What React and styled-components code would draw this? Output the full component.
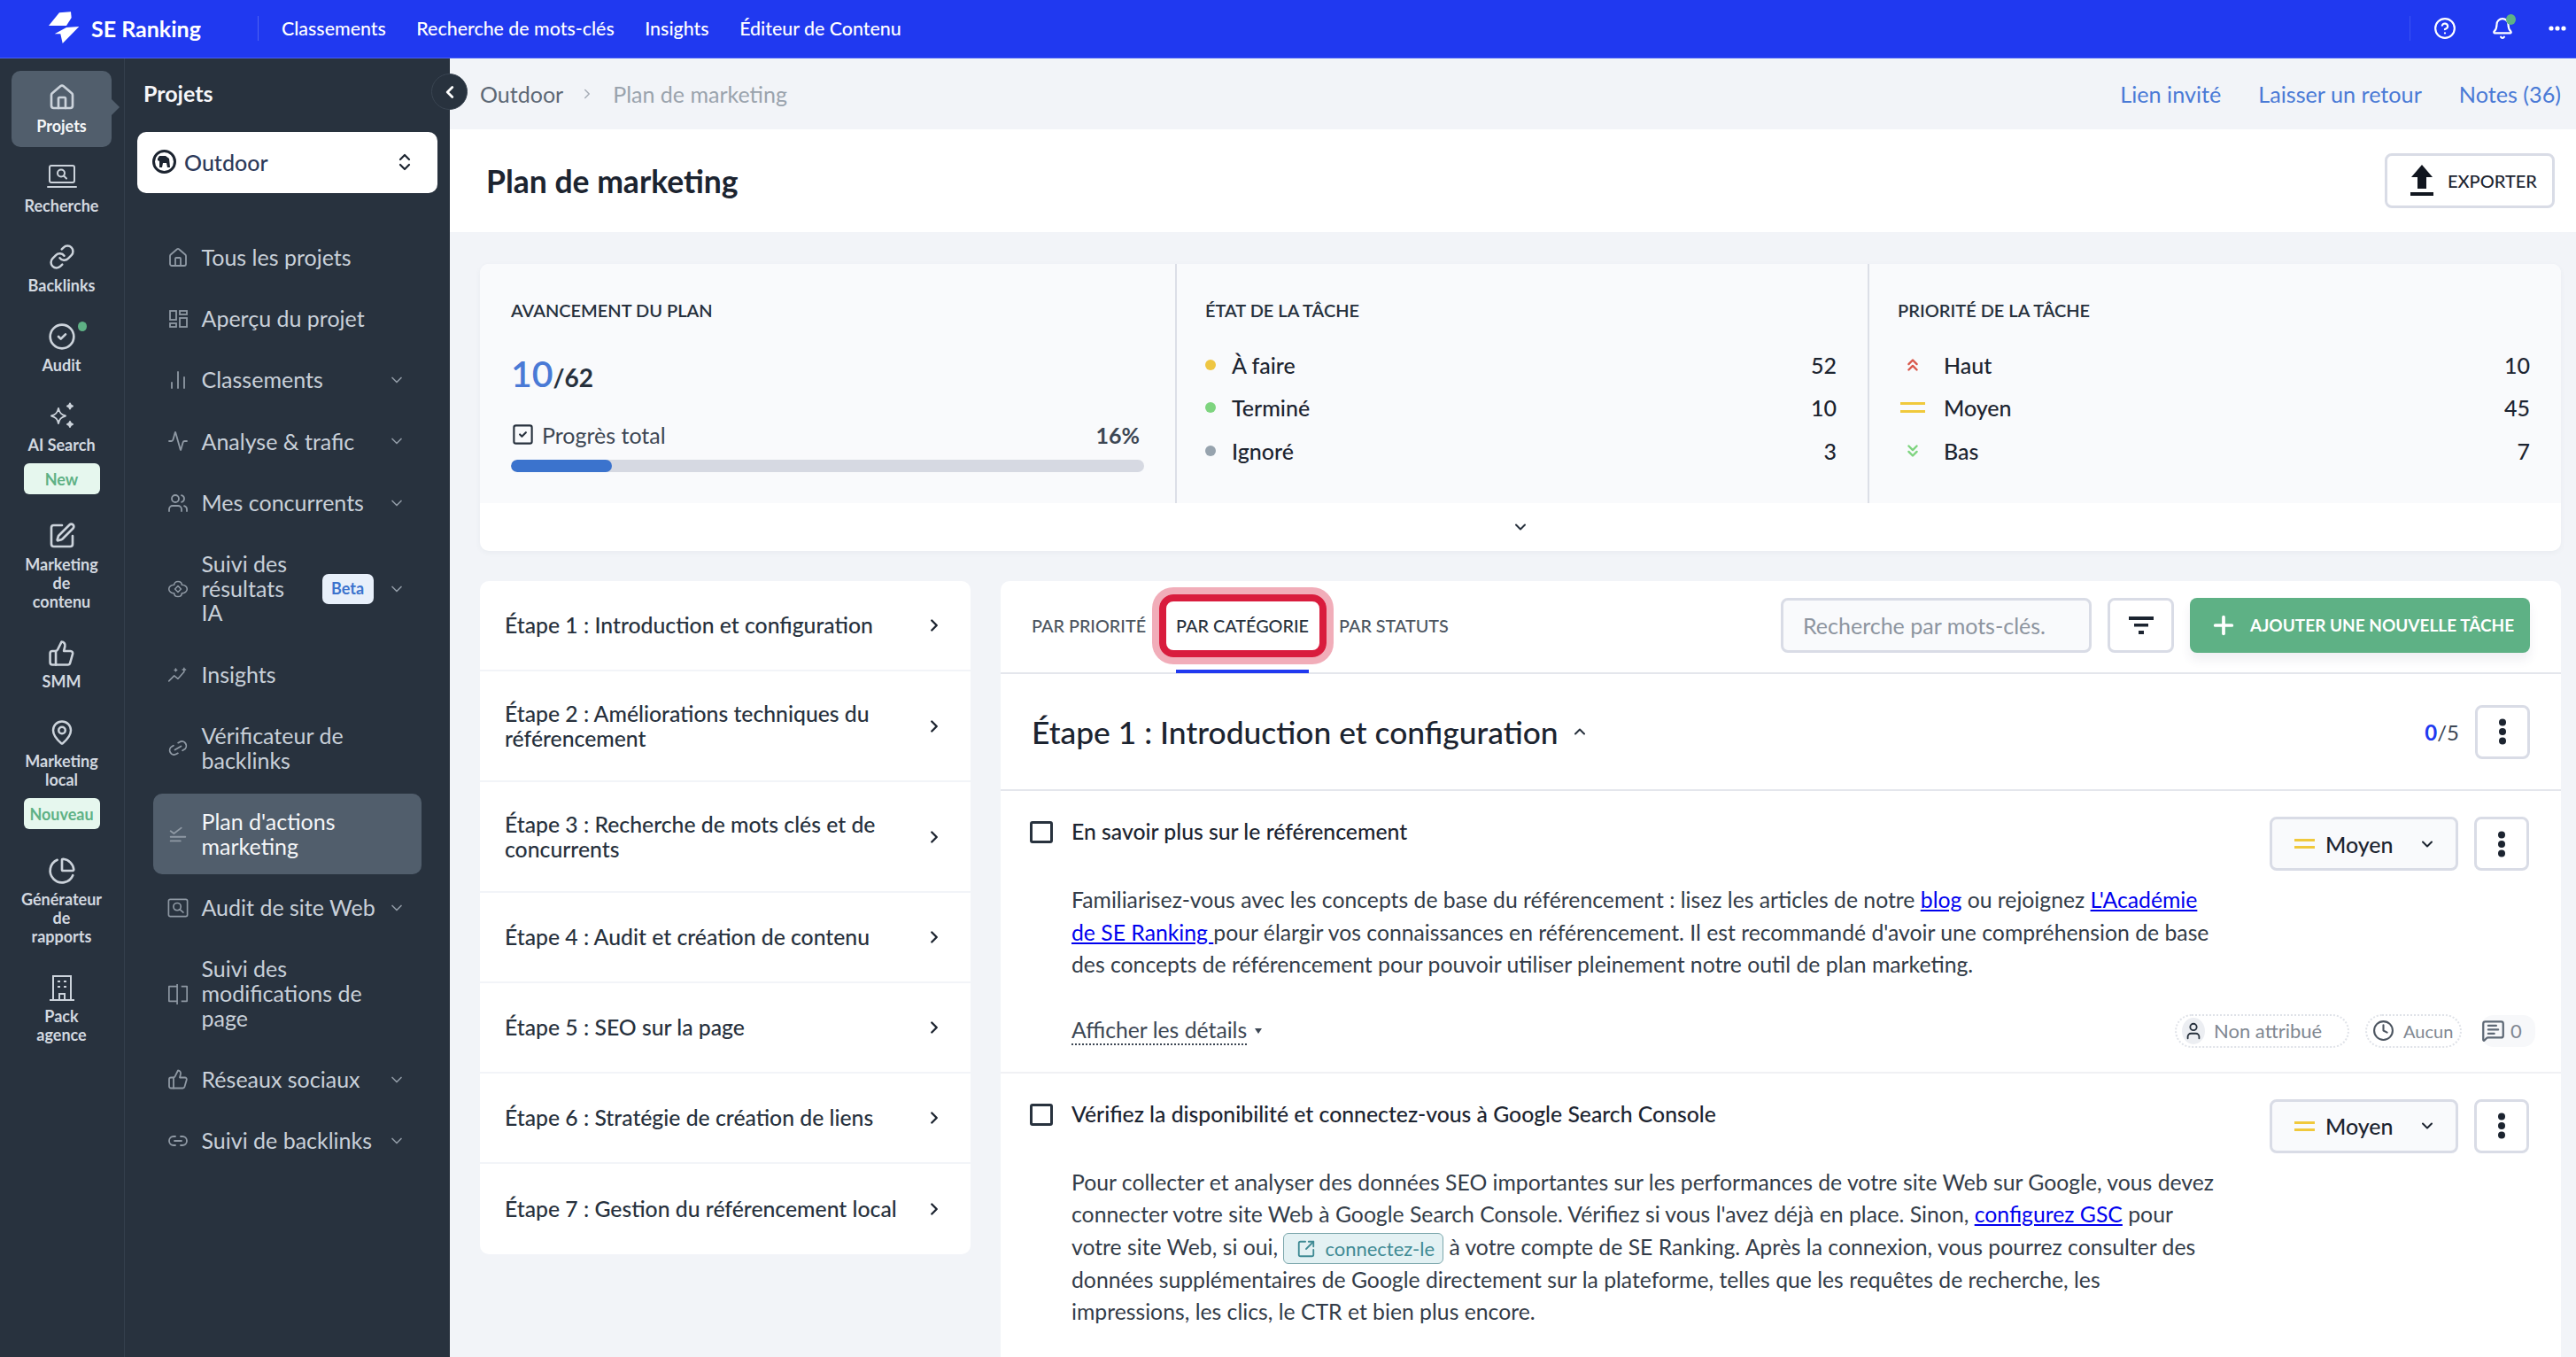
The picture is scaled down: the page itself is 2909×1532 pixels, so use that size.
import React from "react";
import styled, { createGlobalStyle } from "styled-components";
import {
  House, Link as LinkIcon, Link2, SquarePen, ThumbsUp, ChartPie, Activity, Users,
  ChartNoAxesColumn, ChevronDown, ChevronRight, ChevronLeft, ChevronUp, ChevronsUpDown, Bell, CircleHelp,
  CircleCheck, MapPin, Clock, Plus, User, SquareCheck, SquareArrowOutUpRight, MessageSquareText, ChevronsUp, ChevronsDown,
} from "lucide-react";

const Global = createGlobalStyle`
  html, body { margin: 0; padding: 0; background: #f2f4f8; }
  body { font-family: Lato, "Noto Sans", sans-serif; color: #1c2430; }
  *, *::before, *::after { box-sizing: border-box; }
`;

const Page = styled.div`
  width: 2909px; height: 1532px; overflow: hidden;
  display: flex; flex-direction: column; background: #f2f4f8;
`;
const TopBar = styled.header`
  height: 66px; flex: none; background: #2039f0; display: flex; align-items: center; color: #fff;
  border-bottom: 1px solid #4a60f5; padding-bottom: 2px;
`;
const Brand = styled.div`
  width: 292px; height: 28px; display: flex; align-items: center; padding-left: 54px; gap: 13px;
  font-size: 25px; font-weight: 700; border-right: 1px solid #4f62f2; white-space: nowrap;
`;
const TopNav = styled.nav`
  display: flex; gap: 34.5px; padding-left: 26px; font-size: 21.4px; font-weight: 500;
`;
const TopRight = styled.div`
  margin-left: auto; display: flex; align-items: center; height: 28px; border-left: 1px solid #3b52f2;
  padding-left: 26px; padding-right: 11px; gap: 39px;
`;
const BellWrap = styled.span`
  position: relative; display: flex;
  &::after { content: ""; position: absolute; top: -3px; right: -2px; width: 11px; height: 12px; border-radius: 50%; background: #5eb185; }
`;
const Body = styled.div`flex: 1; display: flex; min-height: 0;`;
const Rail = styled.aside`
  width: 141px; flex: none; background: #28323e; border-right: 1px solid #343f4c;
  padding: 14px 14px 0 13px; display: flex; flex-direction: column; gap: 4px;
`;
const RailItem = styled.div`
  position: relative; padding: 14px 0 13px; display: flex; flex-direction: column; align-items: center;
  border-radius: 10px; color: ${p => (p.$active ? "#f4f6f8" : "#d3d9e0")};
  background: ${p => (p.$active ? "#515e6c" : "transparent")};
  ${p => p.$active && `&::after { content: ""; position: absolute; right: -9px; top: 32px; border-left: 9px solid #515e6c; border-top: 9px solid transparent; border-bottom: 9px solid transparent; }`}
`;
const RailIcon = styled.span`
  position: relative; height: 32px; display: flex; align-items: center; justify-content: center; color: #ccd3db;
`;
const RailDot = styled.i`
  position: absolute; right: -12px; top: -1px; width: 10px; height: 11px; border-radius: 50%; background: #5eb185;
`;
const RailLabel = styled.div`
  margin-top: 6px; font-size: 18px; line-height: 21px; font-weight: 700; text-align: center; width: 92px; white-space: pre-line;
`;
const RailBadge = styled.div`
  margin-top: 10px; width: 86px; height: 35px; border-radius: 6px; background: #e6f7ee; color: #5eb185;
  font-size: 18px; font-weight: 700; display: flex; align-items: center; justify-content: center;
`;
const Side = styled.aside`
  width: 367px; flex: none; background: #28323e; padding: 0 14px 0 14px; color: #c8d0d9;
`;
const SideTitle = styled.div`
  height: 83px; padding: 0 0 6px 7px; display: flex; align-items: center;
  font-size: 25px; font-weight: 700; color: #f6f7f9;
`;
const ProjectSelect = styled.div`
  height: 69px; background: #fff; border-radius: 10px; display: flex; align-items: center;
  padding: 0 25px 2px 17px; gap: 9px; font-size: 25px; color: #2d3a5a; font-weight: 500;
  margin-bottom: 38px;
`;
const ProjectLogo = styled.span`
  width: 27px; height: 27px; border-radius: 50%; border: 3.5px solid #1c2430; display: flex; align-items: center; justify-content: center;
`;
const Caret = styled.span`margin-left: auto; display: flex; color: #1c2430;`;
const NavList = styled.div`display: flex; flex-direction: column; padding: 0 18px 0 18px;`;
const NavRow = styled.div`
  display: flex; align-items: center; padding: ${p => (p.$active ? "18px 18px 18px 16px" : "20.85px 18px 20.85px 16px")};
  margin: ${p => (p.$active ? "3px 0 3px" : "0")}; border-radius: 10px; font-size: 25px; line-height: 27.6px;
  background: ${p => (p.$active ? "#515e6c" : "transparent")}; color: ${p => (p.$active ? "#f5f6f8" : "#c8d0d9")};
`;
const NavIcon = styled.span`width: 24px; flex: none; margin-right: 14.5px; display: flex; justify-content: center; color: #8f99a4;`;
const NavText = styled.span`flex: ${p => (p.$narrow ? "none" : "1")}; width: ${p => (p.$narrow ? "118px" : "auto")};`;
const NavChevron = styled.span`width: 20px; flex: none; margin-left: auto; display: flex; justify-content: center; color: #8f99a4;`;
const NavSpacer = styled.span`width: 20px; flex: none; margin-left: auto;`;
const BetaBadge = styled.span`
  width: 58px; height: 34px; margin-left: 18px; border-radius: 7px; background: #e8f0fa; color: #3b73cd;
  font-size: 18px; font-weight: 700; display: flex; align-items: center; justify-content: center;
`;
const Main = styled.main`position: relative; flex: 1; min-width: 0; display: flex; flex-direction: column;`;
const Collapse = styled.div`
  position: absolute; left: -21px; top: 17px; width: 41px; height: 41px; border-radius: 50%;
  background: #28323e; border: 1px solid #3a4552; color: #fff; display: flex; align-items: center; justify-content: center;
`;
const Crumbs = styled.div`
  height: 80px; flex: none; display: flex; align-items: center; padding: 0 17px 0 34px; font-size: 25px;
`;
const CrumbLink = styled.span`color: #5d6875;`;
const CrumbSep = styled.span`display: flex; margin: 0 20px 0 18px; color: #a6adb6;`;
const CrumbCurrent = styled.span`color: #9aa3ad;`;
const GuestLinks = styled.div`margin-left: auto; display: flex; gap: 42px; color: #4a7ad6; font-size: 25.2px;`;
const TitleBand = styled.div`
  height: 116px; flex: none; background: #fff; display: flex; align-items: center; justify-content: space-between; padding: 0 24px 0 41px;
`;
const Title = styled.h1`margin: 0; font-size: 35.5px; font-weight: 700; color: #1c2430;`;
const ExportButton = styled.div`
  width: 192px; height: 62px; border: 3.5px solid #d9dce6; border-radius: 8px; display: flex; align-items: center;
  padding-left: 26px; gap: 16px; font-size: 20px; font-weight: 500; color: #1c2430;
`;
const Content = styled.div`flex: 1; min-height: 0; padding: 36px 17px 0 34px; display: flex; flex-direction: column; gap: 34px;`;
const StatCard = styled.section`
  flex: none; background: #fff; border-radius: 10px; box-shadow: 0 2px 6px rgba(60, 70, 100, .05); overflow: hidden;
`;
const StatGrid = styled.div`display: grid; grid-template-columns: 785px 782px 1fr; height: 270px; background: #f9fafc;`;
const StatCol = styled.div`
  padding: 40px 35px 0 ${p => (p.$first ? "35px" : "32px")};
  border-left: ${p => (p.$first ? "none" : "2px solid #dcdfe7")};
`;
const StatHead = styled.div`font-size: 20px; line-height: 24px; font-weight: 600; color: #27313d; margin-bottom: 25.5px;`;
const StatRow = styled.div`height: 48.5px; display: flex; align-items: center; font-size: 25px; color: #1c2430; font-weight: 500;`;
const Dot = styled.i`width: 12px; height: 12px; border-radius: 50%; background: ${p => p.$c}; margin-right: 18px;`;
const PrioIcon = styled.span`width: 34px; margin-right: 18px; display: flex; justify-content: center; color: ${p => p.$c};`;
const StatNum = styled.span`margin-left: auto;`;
const Score = styled.div`margin-top: 34.5px; height: 51px; display: flex; align-items: baseline; font-size: 28px; font-weight: 700; color: #27313d;`;
const ScoreMain = styled.span`font-size: 41px; font-weight: 600; color: #4a7ad6;`;
const ProgressRow = styled.div`
  margin-top: 28px; height: 30px; display: flex; align-items: center; gap: 8px; font-size: 25px; color: #3d4754;
`;
const Percent = styled.span`margin-left: auto; padding-right: 5px; font-weight: 700;`;
const Bar = styled.div`margin-top: 13px; height: 14px; border-radius: 7px; background: #d6d9e2; overflow: hidden;`;
const BarFill = styled.div`height: 100%; background: #3b73cd; border-radius: 7px;`;
const ExpandRow = styled.div`height: 54px; display: flex; align-items: center; justify-content: center; color: #27313d;`;
const Columns = styled.div`flex: 1; min-height: 0; display: flex; gap: 34px; align-items: flex-start;`;
const StepsPanel = styled.section`width: 554px; flex: none; background: #fff; border-radius: 10px;`;
const StepRow = styled.div`
  min-height: 102px; padding: 34px 30px 34px 28px; display: flex; align-items: center; justify-content: space-between;
  font-size: 24.75px; line-height: 27.5px; font-weight: 500; color: #27313d; gap: 20px;
  border-bottom: ${p => (p.$last ? "none" : "2px solid #f2f4f8")};
`;
const StepChevron = styled.span`display: flex; flex: none; color: #1c2430;`;
const TaskPanel = styled.section`
  flex: 1; min-width: 0; background: #fff; border-radius: 10px 10px 0 0; height: 900px;
`;
const TabsBar = styled.div`
  height: 105px; padding: 0 35px; display: flex; align-items: center; border-bottom: 2px solid #e4e6ec;
`;
const Tabs = styled.div`display: flex; gap: 34px; height: 100%; align-self: stretch;`;
const Tab = styled.div`
  position: relative; display: flex; align-items: center; height: 104px; padding-bottom: 4px;
  font-size: 19.8px; font-weight: 500; color: #4c5560; white-space: nowrap;
  ${p => p.$active && `
    color: #27313d;
    &::before { content: ""; position: absolute; left: -19px; right: -20px; top: 15px; height: 71px; border: 8px solid #d91c3d; border-radius: 16px; box-shadow: 0 0 0 8px rgba(217,28,61,.36); }
    &::after { content: ""; position: absolute; left: 0; right: 0; bottom: 0; height: 4px; background: #2039f0; }
  `}
`;
const TabText = styled.span`position: relative;`;
const Controls = styled.div`margin-left: auto; display: flex; align-items: center; gap: 18px; padding-bottom: 4px;`;
const SearchBox = styled.div`
  width: 351px; height: 62px; border: 3.5px solid #d9dce6; border-radius: 8px; background: #f9fafc; display: flex; align-items: center;
  padding-left: 22px; font-size: 25px; color: #8d95a0;
`;
const SquareBtn = styled.div`
  width: ${p => p.$w || "62px"}; height: ${p => p.$h || "61px"}; flex: none; border: 3.5px solid #d9dce6; border-radius: 8px; background: #fff;
  display: flex; align-items: center; justify-content: center; color: #1c2430;
`;
const AddBtn = styled.div`
  width: 384px; height: 62px; border-radius: 8px; background: #5eb185; color: #fff; display: flex; align-items: center;
  padding-left: 22px; gap: 14px; font-size: 19px; font-weight: 700; white-space: nowrap; box-shadow: 0 8px 12px rgba(60,70,100,.08);
`;
const SectionHead = styled.div`
  height: 132px; padding: 0 35px; display: flex; align-items: center; border-bottom: 2px solid #e4e6ec;
`;
const SectionTitle = styled.h2`margin: 0; font-size: 35.4px; font-weight: 500; color: #1c2430;`;
const SectionCaret = styled.span`display: flex; margin-left: 14px; color: #27313d;`;
const SectionCount = styled.div`margin-left: auto; margin-right: 18px; font-size: 24px; color: #3d4754;`;
const CountMain = styled.span`color: #2039f0; font-weight: 700;`;
const Task = styled.article`border-bottom: ${p => (p.$last ? "none" : "2px solid #f0f1f4")};`;
const TaskHead = styled.div`display: flex; align-items: flex-start; padding: 29px 36px 0 33px;`;
const CheckBox = styled.span`
  width: 26px; height: 25px; margin: 5px 21px 0 0; flex: none; border: 3.5px solid #28323e; border-radius: 3px;
`;
const TaskTitle = styled.div`font-size: 24.75px; line-height: 33px; font-weight: 500; color: #1c2430;`;
const TaskActions = styled.div`margin-left: auto; display: flex; gap: 18px;`;
const PrioritySelect = styled.div`
  width: 213px; height: 61px; border: 3.5px solid #d9dce6; border-radius: 8px; background: #f9fafc;
  display: flex; align-items: center; padding: 0 22px 0 25px; gap: 12px; font-size: 25px; font-weight: 500; color: #1c2430;
`;
const SelectCaret = styled.span`display: flex; margin-left: auto;`;
const EqualBars = styled.span`
  width: ${p => p.$w}; height: ${p => p.$h}; border-top: ${p => p.$t} solid #f0c93c; border-bottom: ${p => p.$t} solid #f0c93c; display: block;
`;
const Desc = styled.p`
  margin: 15px 0 0; padding-left: 80px; width: 1380px; font-size: 24.75px; line-height: 36.6px; color: #333c48;
`;
const A = styled.a`color: #0000ee; text-decoration: underline;`;
const Chip = styled.span`
  display: inline-flex; align-items: center; vertical-align: middle; height: 35px; padding: 0 9px 0 14px; gap: 10px; margin: -6px 0 -4px;
  font-size: 22px; line-height: 24px; color: #3f8a94; background: #e3f1f3; border: 1.5px solid #7da8ad; border-radius: 6px;
`;
const MetaRow = styled.div`
  margin-top: 37px; padding: 0 29px 27px 80px; display: flex; align-items: center; height: 65px;
`;
const Details = styled.span`display: flex; align-items: center; gap: 9px; font-size: 24.75px; color: #3d4754;`;
const DetailsText = styled.span`border-bottom: 2px dotted #3d4754; line-height: 30px;`;
const DetailsCaret = styled.i`border-top: 6px solid #3d4754; border-left: 4px solid transparent; border-right: 4px solid transparent;`;
const Pill = styled.div`
  height: 38px; width: ${p => p.$w}; margin-left: ${p => p.$ml || "0"}; border: 2px dotted #dfe2e8; border-radius: 19px; display: flex; align-items: center;
  padding-left: 6px; gap: ${p => p.$gap || "10px"}; font-size: ${p => p.$fs || "22px"}; color: #808791;
`;
const Avatar = styled.span`
  width: 26px; height: 30px; border-radius: 50%; background: #eceef2; display: flex; align-items: center; justify-content: center; color: #27313d;
`;
const CommentPill = styled.div`
  margin-left: 22px; height: 36px; width: 61px; border-radius: 14px; background: #f7f8fa; display: flex; align-items: center; gap: 6px;
  font-size: 22px; color: #808791;
`;

const Logo = () => (
  <svg width="36" height="37" viewBox="14 8 36 37" fill="#fff">
    <path d="M15 24L27 9.300L40 8.300L40.700 15L35 24Z" />
    <path d="M21.700 33.300L35 26L49.300 25L30.700 44L28.300 33.300Z" />
  </svg>
);

const s = { fill: "none", stroke: "currentColor", strokeWidth: 2, strokeLinecap: "round", strokeLinejoin: "round" };
const LaptopSearch = () => (
  <svg width="34" height="30" viewBox="0 0 34 30" {...s}>
    <rect x="3" y="2" width="28" height="19" rx="2" /><circle cx="16" cy="10.5" r="4" /><path d="M19 13.5l3 3" /><path d="M1 26h32" />
  </svg>
);
const Stars = () => (
  <svg width="34" height="32" viewBox="0 0 34 32" {...s} strokeWidth="1.9">
    <path d="M13 7c1 5 3 7 8 8.500-5 1.500-7 3.500-8 8.500-1-5-3-7-8-8.500 5-1.500 7-3.500 8-8.500z" />
    <path d="M26 1.500c.4 2 1 2.600 3 3-2 .4-2.600 1-3 3-.4-2-1-2.600-3-3 2-.4 2.600-1 3-3zM26 22c.4 2 1 2.600 3 3-2 .4-2.600 1-3 3-.4-2-1-2.600-3-3 2-.4 2.600-1 3-3z" fill="currentColor" />
  </svg>
);
const Agency = () => (
  <svg width="30" height="32" viewBox="0 0 30 32" {...s} strokeLinecap="butt" strokeLinejoin="miter">
    <path d="M5 30V3h20v27M1 30h28" /><path d="M12 30v-7h6v7M10 9h3M17 9h3M10 15h3M17 15h3" />
  </svg>
);
const Bullet = () => <svg width="26" height="24" viewBox="0 0 26 24" {...s}><path d="M4 8l4 3 9-7M4 15h18M4 20h12" /></svg>;
const Diamond = () => (
  <svg width="28" height="24" viewBox="0 0 28 24" {...s} strokeWidth="1.800">
    <path d="M14 2c3 0 5 2 5 4.500 4 0 7 2.500 7 5.500s-3 5.500-7 5.500c0 2.500-2 4.500-5 4.500s-5-2-5-4.500c-4 0-7-2.500-7-5.500s3-5.500 7-5.500C9 4 11 2 14 2z" /><path d="M14 8l4 4-4 4-4-4z" />
  </svg>
);
const Dash = () => (
  <svg width="24" height="22" viewBox="0 0 24 22" {...s} strokeWidth="1.800" strokeLinecap="butt" strokeLinejoin="miter">
    <rect x="3" y="2" width="7" height="10" /><rect x="14" y="2" width="8" height="4" /><rect x="3" y="16" width="7" height="4" /><rect x="14" y="10" width="8" height="10" />
  </svg>
);
const Trend = () => (
  <svg width="28" height="22" viewBox="0 0 28 22" {...s} strokeWidth="1.800"><path d="M2 19l7-7 5 4 8-9" /><path d="M22 2v4M20 4h4M11 3v3M9.500 4.500h3" /></svg>
);
const AuditBox = () => (
  <svg width="26" height="24" viewBox="0 0 26 24" {...s} strokeWidth="1.800">
    <rect x="1.500" y="1.500" width="23" height="21" rx="2" /><circle cx="12" cy="10.500" r="4.500" /><path d="M15.500 14l4 3.500" />
  </svg>
);
const Compare = () => (
  <svg width="26" height="28" viewBox="0 0 26 28" {...s} strokeWidth="1.800" strokeLinecap="butt">
    <path d="M12 5H2v18h10M12 2v25M17 5h7v18h-7" />
  </svg>
);
const UploadIcon = () => (
  <svg width="26" height="36" viewBox="0 0 26 36" fill="#11161f"><path d="M13 0L25 14H18V27H8V14H1Z" /><rect x="0" y="31" width="26" height="4" /></svg>
);
const FilterLines = () => (
  <svg width="28" height="24" viewBox="0 0 28 24" fill="#1c2430"><rect x="0" y="2" width="28" height="4" /><rect x="6" y="10" width="16" height="3.500" /><rect x="11" y="18" width="6" height="4" /></svg>
);
const KebabDots = () => (
  <svg width="10" height="30" viewBox="0 0 10 30" fill="#1c2430"><circle cx="5" cy="4.500" r="4" /><circle cx="5" cy="15" r="4" /><circle cx="5" cy="25.500" r="4" /></svg>
);
const Goat = () => (
  <svg width="17" height="17" viewBox="0 0 17 17" fill="#1c2430"><path d="M1 5l2-3h7l4 3 1 10h-3l-1-5H7l-1 5H3V8L1 7z" /></svg>
);

const railItems = [
  { label: "Projets", icon: <House size={32} strokeWidth={2} />, active: true },
  { label: "Recherche", icon: <LaptopSearch /> },
  { label: "Backlinks", icon: <LinkIcon size={30} strokeWidth={2} /> },
  { label: "Audit", icon: <CircleCheck size={32} strokeWidth={2} />, dot: true },
  { label: "AI Search", icon: <Stars />, badge: "New" },
  { label: "Marketing\nde\ncontenu", icon: <SquarePen size={32} strokeWidth={2} /> },
  { label: "SMM", icon: <ThumbsUp size={31} strokeWidth={2} /> },
  { label: "Marketing\nlocal", icon: <MapPin size={30} strokeWidth={2} />, badge: "Nouveau" },
  { label: "Générateur\nde\nrapports", icon: <ChartPie size={32} strokeWidth={2} /> },
  { label: "Pack\nagence", icon: <Agency /> },
];
const navItems = [
  { label: "Tous les projets", icon: <House size={24} strokeWidth={1.8} /> },
  { label: "Aperçu du projet", icon: <Dash /> },
  { label: "Classements", icon: <ChartNoAxesColumn size={24} strokeWidth={1.8} />, more: true },
  { label: "Analyse & trafic", icon: <Activity size={26} strokeWidth={1.8} />, more: true },
  { label: "Mes concurrents", icon: <Users size={26} strokeWidth={1.8} />, more: true },
  { label: "Suivi des résultats IA", icon: <Diamond />, more: true, beta: true },
  { label: "Insights", icon: <Trend /> },
  { label: "Vérificateur de backlinks", icon: <Link2 size={25} strokeWidth={1.8} style={{ transform: "rotate(-30deg)" }} /> },
  { label: "Plan d'actions marketing", icon: <Bullet />, active: true },
  { label: "Audit de site Web", icon: <AuditBox />, more: true },
  { label: "Suivi des modifications de page", icon: <Compare /> },
  { label: "Réseaux sociaux", icon: <ThumbsUp size={25} strokeWidth={1.8} />, more: true },
  { label: "Suivi de backlinks", icon: <Link2 size={26} strokeWidth={1.8} />, more: true },
];
const steps = [
  "Étape 1 : Introduction et configuration",
  "Étape 2 : Améliorations techniques du référencement",
  "Étape 3 : Recherche de mots clés et de concurrents",
  "Étape 4 : Audit et création de contenu",
  "Étape 5 : SEO sur la page",
  "Étape 6 : Stratégie de création de liens",
  "Étape 7 : Gestion du référencement local",
];

const PrioritySel = () => (
  <TaskActions>
    <PrioritySelect>
      <EqualBars $w="23px" $h="11px" $t="3px" />
      Moyen
      <SelectCaret><ChevronDown size={20} strokeWidth={2.400} /></SelectCaret>
    </PrioritySelect>
    <SquareBtn><KebabDots /></SquareBtn>
  </TaskActions>
);

export default function App() {
  return (
    <Page>
      <Global />
      <TopBar>
        <Brand><Logo />SE Ranking</Brand>
        <TopNav>
          <span>Classements</span><span>Recherche de mots-clés</span><span>Insights</span><span>Éditeur de Contenu</span>
        </TopNav>
        <TopRight>
          <CircleHelp size={26} strokeWidth={2} />
          <BellWrap><Bell size={26} strokeWidth={2} /></BellWrap>
          <svg width="20" height="6" viewBox="0 0 20 6" fill="#fff"><circle cx="3" cy="3" r="2.600" /><circle cx="10" cy="3" r="2.600" /><circle cx="17" cy="3" r="2.600" /></svg>
        </TopRight>
      </TopBar>
      <Body>
        <Rail>
          {railItems.map(r => (
            <RailItem key={r.label} $active={r.active}>
              <RailIcon>{r.icon}{r.dot && <RailDot />}</RailIcon>
              <RailLabel>{r.label}</RailLabel>
              {r.badge && <RailBadge>{r.badge}</RailBadge>}
            </RailItem>
          ))}
        </Rail>
        <Side>
          <SideTitle>Projets</SideTitle>
          <ProjectSelect>
            <ProjectLogo><Goat /></ProjectLogo>
            Outdoor
            <Caret><ChevronsUpDown size={24} strokeWidth={2.200} /></Caret>
          </ProjectSelect>
          <NavList>
            {navItems.map(n => (
              <NavRow key={n.label} $active={n.active}>
                <NavIcon>{n.icon}</NavIcon>
                <NavText $narrow={n.beta}>{n.label}</NavText>
                {n.beta && <BetaBadge>Beta</BetaBadge>}
                {n.more ? <NavChevron><ChevronDown size={22} strokeWidth={2} /></NavChevron> : <NavSpacer />}
              </NavRow>
            ))}
          </NavList>
        </Side>
        <Main>
          <Collapse><ChevronLeft size={22} strokeWidth={3} /></Collapse>
          <Crumbs>
            <CrumbLink>Outdoor</CrumbLink>
            <CrumbSep><ChevronRight size={18} strokeWidth={2} /></CrumbSep>
            <CrumbCurrent>Plan de marketing</CrumbCurrent>
            <GuestLinks><span>Lien invité</span><span>Laisser un retour</span><span>Notes (36)</span></GuestLinks>
          </Crumbs>
          <TitleBand>
            <Title>Plan de marketing</Title>
            <ExportButton><UploadIcon />EXPORTER</ExportButton>
          </TitleBand>
          <Content>
            <StatCard>
              <StatGrid>
                <StatCol $first>
                  <StatHead>AVANCEMENT DU PLAN</StatHead>
                  <Score><ScoreMain>10</ScoreMain>/62</Score>
                  <ProgressRow><SquareCheck size={27} strokeWidth={1.900} color="#27313d" />Progrès total<Percent>16%</Percent></ProgressRow>
                  <Bar><BarFill style={{ width: "16%" }} /></Bar>
                </StatCol>
                <StatCol>
                  <StatHead>ÉTAT DE LA TÂCHE</StatHead>
                  <StatRow><Dot $c="#eec643" />À faire<StatNum>52</StatNum></StatRow>
                  <StatRow><Dot $c="#7ed47f" />Terminé<StatNum>10</StatNum></StatRow>
                  <StatRow><Dot $c="#97a3ae" />Ignoré<StatNum>3</StatNum></StatRow>
                </StatCol>
                <StatCol>
                  <StatHead>PRIORITÉ DE LA TÂCHE</StatHead>
                  <StatRow><PrioIcon $c="#d9594c"><ChevronsUp size={22} strokeWidth={2.600} /></PrioIcon>Haut<StatNum>10</StatNum></StatRow>
                  <StatRow><PrioIcon><EqualBars $w="28px" $h="12px" $t="3px" /></PrioIcon>Moyen<StatNum>45</StatNum></StatRow>
                  <StatRow><PrioIcon $c="#7ed47f"><ChevronsDown size={22} strokeWidth={2.600} /></PrioIcon>Bas<StatNum>7</StatNum></StatRow>
                </StatCol>
              </StatGrid>
              <ExpandRow><ChevronDown size={20} strokeWidth={2.400} /></ExpandRow>
            </StatCard>
            <Columns>
              <StepsPanel>
                {steps.map((t, i) => (
                  <StepRow key={t} $last={i === steps.length - 1}>
                    {t}
                    <StepChevron><ChevronRight size={22} strokeWidth={2.600} /></StepChevron>
                  </StepRow>
                ))}
              </StepsPanel>
              <TaskPanel>
                <TabsBar>
                  <Tabs>
                    <Tab>PAR PRIORITÉ</Tab>
                    <Tab $active><TabText>PAR CATÉGORIE</TabText></Tab>
                    <Tab>PAR STATUTS</Tab>
                  </Tabs>
                  <Controls>
                    <SearchBox>Recherche par mots-clés.</SearchBox>
                    <SquareBtn $w="75px" $h="62px"><FilterLines /></SquareBtn>
                    <AddBtn><Plus size={32} strokeWidth={2.800} />AJOUTER UNE NOUVELLE TÂCHE</AddBtn>
                  </Controls>
                </TabsBar>
                <SectionHead>
                  <SectionTitle>Étape 1 : Introduction et configuration</SectionTitle>
                  <SectionCaret><ChevronUp size={20} strokeWidth={2.400} /></SectionCaret>
                  <SectionCount><CountMain>0</CountMain>/5</SectionCount>
                  <SquareBtn><KebabDots /></SquareBtn>
                </SectionHead>
                <Task>
                  <TaskHead>
                    <CheckBox />
                    <TaskTitle>En savoir plus sur le référencement</TaskTitle>
                    <PrioritySel />
                  </TaskHead>
                  <Desc>
                    Familiarisez-vous avec les concepts de base du référencement : lisez les articles de notre <A>blog</A> ou rejoignez <A>L'Académie de SE Ranking </A>pour élargir vos connaissances en référencement. Il est recommandé d'avoir une compréhension de base des concepts de référencement pour pouvoir utiliser pleinement notre outil de plan marketing.
                  </Desc>
                  <MetaRow>
                    <Details><DetailsText>Afficher les détails</DetailsText><DetailsCaret /></Details>
                    <Pill $w="197px" $ml="auto"><Avatar><User size={22} strokeWidth={2} /></Avatar>Non attribué</Pill>
                    <Pill $w="109px" $ml="18px" $fs="20px"><Clock size={25} strokeWidth={2} color="#4c5560" style={{ flex: "none" }} />Aucun</Pill>
                    <CommentPill><MessageSquareText size={27} strokeWidth={2} color="#5d6875" />0</CommentPill>
                  </MetaRow>
                </Task>
                <Task $last>
                  <TaskHead>
                    <CheckBox />
                    <TaskTitle>Vérifiez la disponibilité et connectez-vous à Google Search Console</TaskTitle>
                    <PrioritySel />
                  </TaskHead>
                  <Desc>
                    Pour collecter et analyser des données SEO importantes sur les performances de votre site Web sur Google, vous devez connecter votre site Web à Google Search Console. Vérifiez si vous l'avez déjà en place. Sinon, <A>configurez GSC</A> pour votre site Web, si oui, <Chip><SquareArrowOutUpRight size={22} strokeWidth={2} />connectez-le</Chip> à votre compte de SE Ranking. Après la connexion, vous pourrez consulter des données supplémentaires de Google directement sur la plateforme, telles que les requêtes de recherche, les impressions, les clics, le CTR et bien plus encore.
                  </Desc>
                </Task>
              </TaskPanel>
            </Columns>
          </Content>
        </Main>
      </Body>
    </Page>
  );
}
